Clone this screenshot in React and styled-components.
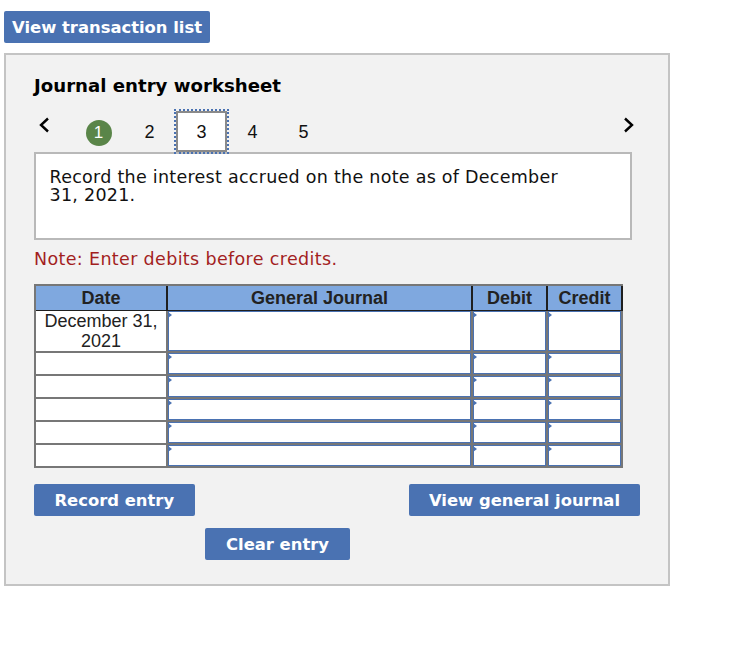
import React from "react";
import styled, { createGlobalStyle } from "styled-components";

const GlobalStyle = createGlobalStyle`
  html, body {
    margin: 0;
    padding: 0;
    background: #fff;
  }
`;

const Page = styled.div`
  padding: 11px 0 0 4px;
  width: 748px;
  font-family: "DejaVu Sans", Verdana, sans-serif;
`;

const Button = styled.button`
  display: block;
  height: 32px;
  padding: 0 ${(p) => p.$pad || 20}px;
  border: none;
  border-radius: 2px;
  background: #4a72b2;
  color: #fff;
  font-family: "DejaVu Sans", Verdana, sans-serif;
  font-size: 16.4px;
  font-weight: bold;
  white-space: nowrap;
`;

const Panel = styled.section`
  box-sizing: border-box;
  width: 666px;
  margin-top: 10px;
  padding: 18px 28px 24px;
  border: 2px solid #c4c4c4;
  background: #f2f2f2;
`;

const Title = styled.h2`
  margin: 0;
  font-size: 18.15px;
  line-height: 26px;
  height: 24px;
  font-weight: bold;
  color: #000;
`;

const Stepper = styled.nav`
  display: flex;
  align-items: flex-start;
  height: 43px;
  margin-top: 12px;
`;

const Arrow = styled.svg`
  flex: none;
  width: 11px;
  height: 16px;
  margin: 8px ${(p) => p.$right || 0}px 0 ${(p) => p.$left || 0}px;
  fill: none;
  stroke: #000;
  stroke-width: 2.4;
`;

const Steps = styled.div`
  display: flex;
  margin: 0 auto 0 23px;
`;

const Step = styled.div`
  box-sizing: border-box;
  flex: none;
  width: 51px;
  height: 41px;
  margin-top: 2px;
  display: flex;
  align-items: center;
  justify-content: center;
  padding-top: 2px;
  font-family: "Liberation Sans", Arial, sans-serif;
  font-size: 18px;
  color: #111;
  ${(p) =>
    p.$active &&
    `
    margin-left: 1px;
    background: #fff;
    border: 2px solid #8a8a8a;
    outline: 2px dotted #4a72b2;
    position: relative;
    z-index: 1;
  `}
`;

const Done = styled.span`
  width: 26px;
  height: 26px;
  margin-top: 1px;
  border-radius: 50%;
  background: #5a8549;
  color: #fff;
  display: flex;
  align-items: center;
  justify-content: center;
  font-size: 17px;
`;

const Prompt = styled.div`
  box-sizing: border-box;
  width: 598px;
  height: 88px;
  padding: 14px 60px 12px 13.5px;
  border: 2px solid #b9b9b9;
  background: #fff;
  font-size: 17.5px;
  letter-spacing: 0.27px;
  line-height: 18px;
  color: #111;
`;

const Note = styled.p`
  margin: 9px 0 -1px;
  font-size: 17.5px;
  letter-spacing: 0.35px;
  line-height: 20px;
  color: #a31f1f;
`;

const Sheet = styled.div`
  width: 589px;
  box-sizing: border-box;
  margin-top: 16px;
  padding: 2px 0 2px 2px;
  background: #777;
  display: flex;
  flex-direction: column;
  gap: 2px;
  font-family: "Liberation Sans", Arial, sans-serif;
  font-size: 18px;
  color: #222;
`;

const Row = styled.div`
  display: grid;
  grid-template-columns: 130px 303px 73px 73px;
  column-gap: 2px;
  padding-right: 2px;
  height: ${(p) => p.$height}px;
`;

const HeadRow = styled(Row)`
  background: #1f1f1f;
  padding-bottom: 2px;
  margin-bottom: -2px;
  height: 23px;
  box-sizing: content-box;
`;

const HeadCell = styled.div`
  background: #7fa8df;
  font-weight: bold;
  text-align: center;
  line-height: 24px;
`;

const DateCell = styled.div`
  background: #fff;
  text-align: center;
  line-height: 20px;
`;

const InputCell = styled.div`
  position: relative;
  box-sizing: border-box;
  background: #fff;
  border: 1px solid #4a72b2;

  &::before {
    content: "";
    position: absolute;
    top: 0;
    left: -1px;
    border-left: 4px solid #4a72b2;
    border-top: 3px solid transparent;
    border-bottom: 3px solid transparent;
  }
`;

const Actions = styled.div`
  display: flex;
  justify-content: space-between;
  width: 606px;
  margin-top: 16px;
`;

const ClearRow = styled.div`
  margin: 12px 0 0 171px;
`;

const rows = [
  { height: 40, date: ["December 31,", "2021"] },
  { height: 21 },
  { height: 21 },
  { height: 21 },
  { height: 21 },
  { height: 21 },
];

const App = () => {
  return (
    <Page>
      <GlobalStyle />
      <Button $pad={8}>View transaction list</Button>
      <Panel>
        <Title>Journal entry worksheet</Title>
        <Stepper>
          <Arrow $left={5} viewBox="0 0 11 16">
            <path d="M9 1.5 2 8l7 6.5" />
          </Arrow>
          <Steps>
            <Step>
              <Done>1</Done>
            </Step>
            <Step>2</Step>
            <Step $active>3</Step>
            <Step>4</Step>
            <Step>5</Step>
          </Steps>
          <Arrow $right={6} viewBox="0 0 11 16">
            <path d="M2 1.5 9 8l-7 6.5" />
          </Arrow>
        </Stepper>
        <Prompt>
          Record the interest accrued on the note as of December 31, 2021.
        </Prompt>
        <Note>Note: Enter debits before credits.</Note>
        <Sheet>
          <HeadRow>
            <HeadCell>Date</HeadCell>
            <HeadCell>General Journal</HeadCell>
            <HeadCell>Debit</HeadCell>
            <HeadCell>Credit</HeadCell>
          </HeadRow>
          {rows.map((row, i) => (
            <Row key={i} $height={row.height}>
              <DateCell>
                {row.date && (
                  <>
                    {row.date[0]}
                    <br />
                    {row.date[1]}
                  </>
                )}
              </DateCell>
              <InputCell />
              <InputCell />
              <InputCell />
            </Row>
          ))}
        </Sheet>
        <Actions>
          <Button $pad={20.5}>Record entry</Button>
          <Button>View general journal</Button>
        </Actions>
        <ClearRow>
          <Button $pad={21}>Clear entry</Button>
        </ClearRow>
      </Panel>
    </Page>
  );
};

export default App;
